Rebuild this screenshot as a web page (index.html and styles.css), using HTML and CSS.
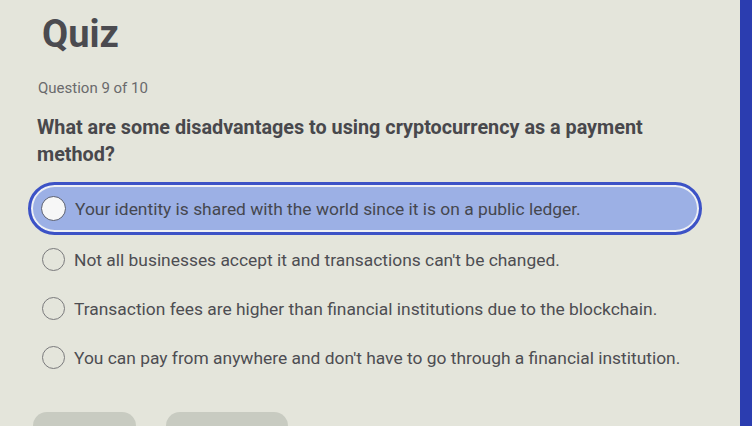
FILE: index.html
```html
<!DOCTYPE html>
<html>
<head>
<meta charset="utf-8">
<link rel="stylesheet" href="styles.css">
</head>
<body>
<div class="screen">
  <main class="quiz">
    <h1 class="title">Quiz</h1>
    <div class="counter">Question 9 of 10</div>
    <p class="question">What are some disadvantages to using cryptocurrency as a payment method?</p>
    <div class="options">
      <div class="option selected"><span class="radio"></span><span class="label">Your identity is shared with the world since it is on a public ledger.</span></div>
      <div class="option"><span class="radio"></span><span class="label">Not all businesses accept it and transactions can't be changed.</span></div>
      <div class="option"><span class="radio"></span><span class="label">Transaction fees are higher than financial institutions due to the blockchain.</span></div>
      <div class="option"><span class="radio"></span><span class="label">You can pay from anywhere and don't have to go through a financial institution.</span></div>
    </div>
    <div class="buttons">
      <div class="btn btn-a"></div>
      <div class="btn btn-b"></div>
    </div>
  </main>
  <div class="edge"></div>
</div>
</body>
</html>
```
FILE: styles.css
```css
html, body {
  margin: 0;
  padding: 0;
  height: 100%;
  overflow: hidden;
}
body {
  background: #e4e5db;
  font-family: Roboto, "Liberation Sans", sans-serif;
  color: #4a4a4f;
}
.screen {
  display: flex;
  height: 426px;
  overflow: hidden;
}
.quiz {
  flex: 1;
  padding: 12px 0 0 38px;
  box-sizing: border-box;
  overflow: hidden;
}
.edge {
  width: 12px;
  background: #2b3db0;
}
.title {
  margin: 0 0 0 4px;
  font-size: 38px;
  font-weight: 700;
  line-height: 44px;
  color: #4b4b50;
}
.counter {
  margin-top: 22px;
  font-size: 15px;
  line-height: 20px;
  color: #6a6a6c;
}
.question {
  margin: 16px 0 0 -1px;
  font-size: 19.8px;
  font-weight: 700;
  line-height: 27px;
  width: 665px;
  color: #48484c;
}
.options {
  margin: 14px 0 0 -8px;
  display: flex;
  flex-direction: column;
}
.option {
  display: flex;
  align-items: center;
  height: 49px;
  padding-left: 8px;
  box-sizing: border-box;
  font-size: 17.4px;
  color: #4d4d52;
}
.option.selected {
  width: 674px;
  height: 53px;
  padding-left: 10px;
  margin-left: -2px;
  background: #9cb0e5;
  border: 3px solid #3c52c6;
  box-shadow: inset 0 0 0 2px #eef0f5;
  border-radius: 27px;
  color: #45474f;
}
.radio {
  width: 23px;
  height: 23px;
  border: 1.5px solid #7a7a7c;
  border-radius: 50%;
  box-sizing: border-box;
  flex: none;
  margin-right: 9px;
  margin-left: 4px;
}
.option.selected .radio {
  background: #f7f7f7;
  border-color: #5a5f70;
  width: 25px;
  height: 25px;
  margin-left: 0;
  margin-right: 9px;
}
.buttons {
  display: flex;
  gap: 30px;
  margin: 30px 0 0 -5px;
}
.btn {
  height: 40px;
  border-radius: 14px;
  background: #c8cbc1;
}
.btn-a { width: 103px; }
.btn-b { width: 122px; }
```
